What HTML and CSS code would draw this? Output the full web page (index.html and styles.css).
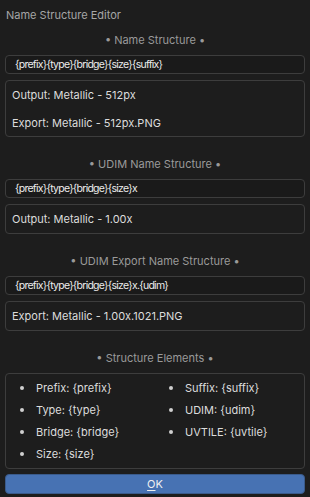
FILE: index.html
```html
<!DOCTYPE html>
<html lang="en">
<head>
  <meta charset="UTF-8">
  <title>Name Structure Editor</title>
  <link rel="stylesheet" href="styles.css">
</head>
<body>
  <div class="popup">
    <div class="title">Name Structure Editor</div>

    <div class="section-label first">• Name Structure •</div>
    <div class="field">{prefix}{type}{bridge}{size}{suffix}</div>
    <div class="box tall">
      <div>Output: Metallic - 512px</div>
      <div>Export: Metallic - 512px.PNG</div>
    </div>

    <div class="section-label">• UDIM Name Structure •</div>
    <div class="field">{prefix}{type}{bridge}{size}x</div>
    <div class="box">
      <div>Output: Metallic - 1.00x</div>
    </div>

    <div class="section-label">• UDIM Export Name Structure •</div>
    <div class="field">{prefix}{type}{bridge}{size}x.{udim}</div>
    <div class="box">
      <div>Export: Metallic - 1.00x.1021.PNG</div>
    </div>

    <div class="section-label">• Structure Elements •</div>
    <div class="box elements">
      <ul>
        <li>Prefix: {prefix}</li>
        <li>Type: {type}</li>
        <li>Bridge: {bridge}</li>
        <li>Size: {size}</li>
      </ul>
      <ul>
        <li>Suffix: {suffix}</li>
        <li>UDIM: {udim}</li>
        <li>UVTILE: {uvtile}</li>
      </ul>
    </div>

    <button class="ok"><u>O</u>K</button>
  </div>
</body>
</html>
```

FILE: styles.css
```css
* {
  box-sizing: border-box;
  margin: 0;
  padding: 0;
}

body {
  background-color: #1d1d1d;
  color: #e0e0e0;
  font-family: Inter, 'Noto Sans', sans-serif;
  font-size: 11px;
}

.popup {
  padding: 7px 5px 4px;
}

.title {
  color: #a6a6a6;
  padding-left: 1px;
  height: 16px;
  line-height: 16px;
}

.section-label {
  color: #9a9a9a;
  text-align: center;
  height: 16px;
  line-height: 16px;
  margin: 19px 0 7px;
}

.section-label.first {
  margin-top: 9px;
}

.field {
  height: 19px;
  line-height: 18px;
  padding-left: 9px;
  border: 1px solid #3d3d3d;
  border-radius: 4px;
  background-color: #1a1a1a;
  color: #ececec;
  font-size: 10.5px;
  letter-spacing: -0.75px;
}

.box {
  margin-top: 6px;
  border: 1px solid #3d3d3d;
  border-radius: 4px;
  padding: 6px 6px;
  line-height: 16px;
  color: #dcdcdc;
}

.box.tall {
  padding: 6px 6px 5px;
}

.box.tall div + div {
  margin-top: 12px;
}

.elements {
  display: flex;
  padding: 6px 0 0;
}

.elements ul {
  list-style: none;
  flex: 1;
}

.elements li {
  position: relative;
  padding-left: 30px;
  height: 22px;
  line-height: 16px;
}

.elements li::before {
  content: '';
  position: absolute;
  left: 14px;
  top: 6px;
  width: 4px;
  height: 4px;
  border-radius: 50%;
  background: #d0d0d0;
}

.ok {
  display: block;
  width: 100%;
  margin-top: 5px;
  height: 20px;
  border: 1px solid #3a5a8a;
  border-radius: 4px;
  background-color: #4772b3;
  color: #f0f0f0;
  font-family: Inter, 'Noto Sans', sans-serif;
  font-size: 11px;
}

.ok u {
  text-underline-offset: 2px;
}
```
